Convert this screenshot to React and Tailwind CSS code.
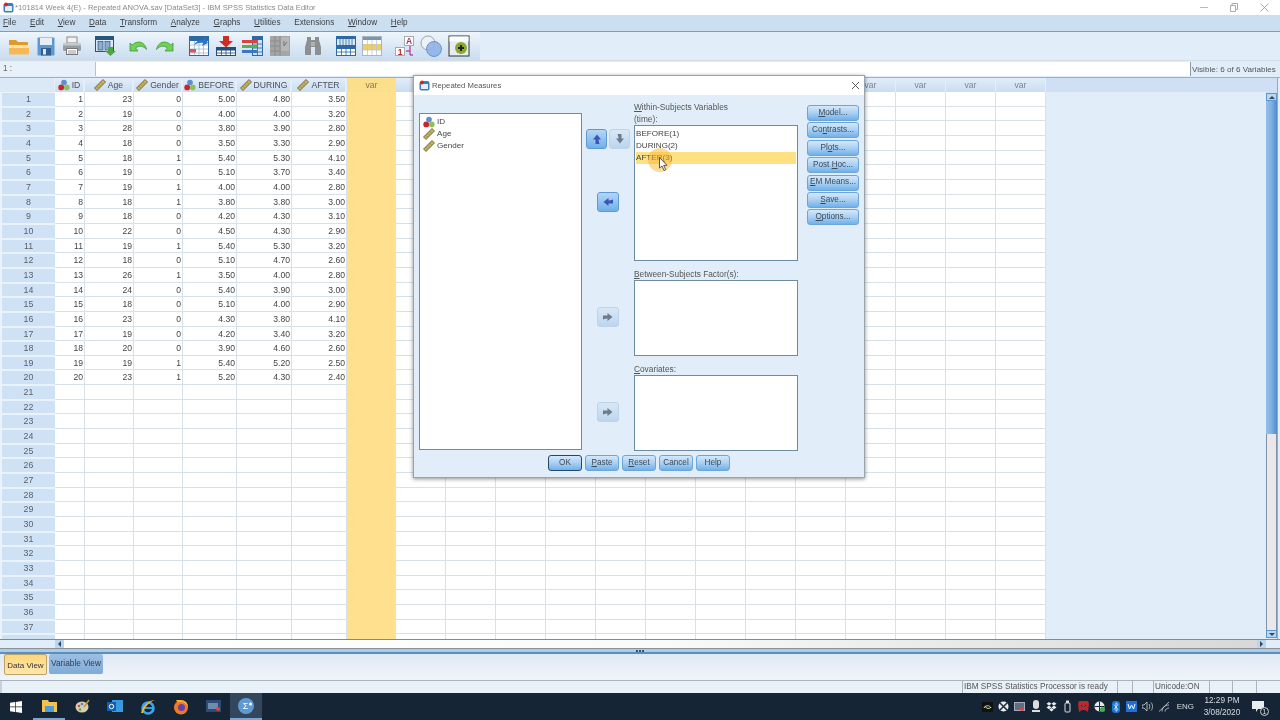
// App.jsx
const FONT = "font-['Liberation_Sans',Arial,sans-serif]";

const rows = [
  [1, 23, 0, '5.00', '4.80', '3.50'],
  [2, 19, 0, '4.00', '4.00', '3.20'],
  [3, 28, 0, '3.80', '3.90', '2.80'],
  [4, 18, 0, '3.50', '3.30', '2.90'],
  [5, 18, 1, '5.40', '5.30', '4.10'],
  [6, 19, 0, '5.10', '3.70', '3.40'],
  [7, 19, 1, '4.00', '4.00', '2.80'],
  [8, 18, 1, '3.80', '3.80', '3.00'],
  [9, 18, 0, '4.20', '4.30', '3.10'],
  [10, 22, 0, '4.50', '4.30', '2.90'],
  [11, 19, 1, '5.40', '5.30', '3.20'],
  [12, 18, 0, '5.10', '4.70', '2.60'],
  [13, 26, 1, '3.50', '4.00', '2.80'],
  [14, 24, 0, '5.40', '3.90', '3.00'],
  [15, 18, 0, '5.10', '4.00', '2.90'],
  [16, 23, 0, '4.30', '3.80', '4.10'],
  [17, 19, 0, '4.20', '3.40', '3.20'],
  [18, 20, 0, '3.90', '4.60', '2.60'],
  [19, 19, 1, '5.40', '5.20', '2.50'],
  [20, 23, 1, '5.20', '4.30', '2.40'],
];

// la fila 38 solo asoma unos pixeles, va sin numero
const rowNums = Array.from({ length: 38 }, (_, i) => i + 1);
const extraCols = Array.from({ length: 13 }, (_, i) => i);

const NominalIcon = () => (
  <svg width="12" height="12" viewBox="0 0 12 12" className="shrink-0">
    <circle cx="6" cy="3.5" r="2.8" fill="#5b8fd0" />
    <circle cx="3.2" cy="8.4" r="2.9" fill="#c8262c" />
    <circle cx="8.8" cy="8.4" r="2.8" fill="#8fbf5a" />
  </svg>
);

const ScaleIcon = () => (
  <svg width="12" height="12" viewBox="0 0 12 12" className="shrink-0">
    <path d="M0.5 9 L9 0.5 L11.5 3 L3 11.5 Z" fill="#c9b25c" stroke="#5d5330" strokeWidth="0.8" />
    <path d="M3 7.5l1.2 1.2M5 5.500l1.200 1.200M7 3.500l1.200 1.200" stroke="#5d5330" strokeWidth="0.7" />
  </svg>
);

const AppIcon = () => (
  <svg width="11" height="11" viewBox="0 0 11 11" className="shrink-0">
    <rect x="0.500" y="1" width="10" height="9.500" rx="2" fill="#3d7eb5" />
    <rect x="2" y="4" width="7" height="5" fill="#e6eef5" />
    <path d="M3 0.500v4M1 2.500h4" stroke="#c4262e" strokeWidth="1.400" />
  </svg>
);

const FolderIcon = () => (
  <svg width="22" height="20" viewBox="0 0 22 20">
    <path d="M1 4h7l2 2h10v3H1z" fill="#e09a2c" />
    <path d="M1 9h20v8a1.500 1.500 0 0 1-1.500 1.500h-17A1.500 1.500 0 0 1 1 17z" fill="#f6b955" />
    <path d="M1 9h20v3H1z" fill="#ffe3a6" />
  </svg>
);

const SaveIcon = () => (
  <svg width="18" height="19" viewBox="0 0 18 19">
    <rect x="0.500" y="0.500" width="17" height="18" rx="1" fill="#5f97cf" />
    <rect x="3" y="1" width="12" height="7" fill="#e8eef5" />
    <rect x="4" y="11" width="10" height="7.500" fill="#2f5f93" />
    <rect x="6" y="12" width="3" height="5.500" fill="#dfe9f3" />
  </svg>
);

const PrintIcon = () => (
  <svg width="20" height="20" viewBox="0 0 20 20">
    <rect x="5" y="1" width="10" height="6" fill="#f2f2f2" stroke="#888" />
    <rect x="1" y="7" width="18" height="8" rx="1.500" fill="#9a9fa5" />
    <rect x="1" y="7" width="18" height="2.500" fill="#c6cacd" />
    <rect x="4.500" y="12.500" width="11" height="6" fill="#fff" stroke="#777" />
    <path d="M6 15h8M6 17h8" stroke="#999" />
  </svg>
);

const GotoVarIcon = () => (
  <svg width="21" height="20" viewBox="0 0 21 20">
    <rect x="0.500" y="0.500" width="18" height="15" fill="#dfe8f2" stroke="#28557f" />
    <rect x="1" y="1" width="17" height="3" fill="#28557f" />
    <rect x="3" y="5.500" width="5" height="8.500" fill="#89aed2" stroke="#28557f" strokeWidth="0.7" />
    <rect x="10" y="5.500" width="5" height="8.500" fill="#89aed2" stroke="#28557f" strokeWidth="0.7" />
    <path d="M13 11h5v4h3l-5.500 5-5.500-5h3z" fill="#4ca83c" />
  </svg>
);

const UndoIcon = ({ flip }) => (
  <svg width="18" height="12" viewBox="0 0 18 12" style={flip ? { transform: 'scaleX(-1)' } : undefined}>
    <path d="M1 11V3l2.200 2C6 2 11 1 14 3.500c2 1.500 3 3.500 3.500 6-3-3.500-7-4.500-11-1.500L9 11z" fill="#6fd05a" stroke="#3f9a3a" strokeWidth="0.8" />
  </svg>
);

const GridBase = ({ children, header = '#2d6aa3' }) => (
  <svg width="20" height="20" viewBox="0 0 20 20">
    <rect x="0.500" y="0.500" width="19" height="19" fill="#fff" stroke={header} />
    <rect x="1" y="1" width="18" height="4" fill={header} />
    <path d="M1 9h18M1 13h18M1 17h18M5.500 5v14M10 5v14M14.500 5v14" stroke="#9db9d5" strokeWidth="0.8" />
    {children}
  </svg>
);

const GotoCaseIcon = () => (
  <GridBase>
    <rect x="1" y="13" width="6" height="3.500" fill="#d9545c" />
    <path d="M5 9c2-4 6-6 10-5l1-3 3 6-6 3 1-3c-3-.5-6 .5-9 2z" fill="#2c76c8" />
  </GridBase>
);

const InsertCaseIcon = () => (
  <svg width="20" height="20" viewBox="0 0 20 20">
    <path d="M7 0h6v5h4l-7 6.500L3 5h4z" fill="#cf2d23" />
    <rect x="0.500" y="11.500" width="19" height="8" fill="#fff" stroke="#234f7c" />
    <rect x="1" y="12" width="18" height="2.500" fill="#234f7c" />
    <path d="M1 17h18M5.500 14v5M10 14v5M14.500 14v5" stroke="#234f7c" strokeWidth="0.8" />
  </svg>
);

const InsertVarIcon = () => (
  <svg width="21" height="20" viewBox="0 0 21 20">
    <rect x="10.500" y="0.500" width="10" height="19" fill="#cfe1f1" stroke="#2d6aa3" />
    <rect x="11" y="1" width="9" height="3" fill="#2d6aa3" />
    <path d="M11 8h9M11 12h9M11 16h9M15.500 4v15" stroke="#2d6aa3" strokeWidth="0.8" />
    <rect x="0" y="4" width="15" height="3" fill="#d8453f" />
    <rect x="0" y="9" width="15" height="3" fill="#59b14b" />
    <rect x="0" y="14" width="15" height="3" fill="#3a78c4" />
  </svg>
);

const SplitIcon = () => (
  <svg width="20" height="20" viewBox="0 0 20 20">
    <rect x="0" y="0" width="20" height="20" fill="#a3a5a6" />
    <path d="M5 0v20M10 0v20M0 5h10M0 10h10M0 15h10" stroke="#8a8c8d" />
    <rect x="11" y="1" width="8" height="14" fill="#b5b6b6" />
    <path d="M14 5v5M14 10l3-4" stroke="#777" />
  </svg>
);

const BinocularsIcon = () => (
  <svg width="18" height="20" viewBox="0 0 18 20">
    <path d="M3 1h4v3h4V1h4v3l2 7v7a1 1 0 0 1-1 1h-5v-8H7v8H2a1 1 0 0 1-1-1v-7l2-7z" fill="#8d9092" />
    <rect x="7" y="6" width="4" height="4" fill="#b0b2b3" />
  </svg>
);

const ValueLabelsIcon = () => (
  <svg width="20" height="20" viewBox="0 0 20 20">
    <rect x="0.500" y="0.500" width="19" height="9" fill="#dbe8f4" stroke="#2d6aa3" />
    <rect x="1" y="1" width="18" height="2" fill="#2d6aa3" />
    <path d="M4 3v6M7 3v6M10 3v6M13 3v6M16 3v6" stroke="#2d6aa3" strokeWidth="0.8" />
    <rect x="0.500" y="10.500" width="19" height="9" fill="#fff" stroke="#2d6aa3" />
    <rect x="1" y="11" width="18" height="2" fill="#2d6aa3" />
    <path d="M1 16h18M5.500 13v6M10 13v6M14.500 13v6" stroke="#2d6aa3" strokeWidth="0.8" />
  </svg>
);

const WeightIcon = () => (
  <svg width="20" height="20" viewBox="0 0 20 20">
    <rect x="0.500" y="0.500" width="19" height="19" fill="#fff" stroke="#a7b6c4" />
    <rect x="1" y="1" width="18" height="3" fill="#7d94ab" />
    <rect x="1" y="8" width="18" height="6" fill="#f0cf62" />
    <path d="M1 9h18M1 14h18M5.500 4v15M10 4v15M14.500 4v15" stroke="#b9c6d2" strokeWidth="0.8" />
  </svg>
);

const LabelIcon = () => (
  <svg width="20" height="21" viewBox="0 0 20 21" className={FONT}>
    <rect x="9.500" y="0.500" width="9" height="9" fill="#fff" stroke="#aaa" />
    <text x="14" y="8" fontSize="8.500" fontWeight="700" fill="#b32a7c" textAnchor="middle">A</text>
    <rect x="0.500" y="11.500" width="9" height="8" fill="#fff" stroke="#aaa" />
    <text x="5" y="18.500" fontSize="8.500" fontWeight="700" fill="#b32a2a" textAnchor="middle">1</text>
    <path d="M11 15h4M15 10v9M15 19h3" stroke="#b64e9e" strokeWidth="1.400" fill="none" />
  </svg>
);

const SetsIcon = () => (
  <svg width="22" height="22" viewBox="0 0 22 22">
    <circle cx="8" cy="8" r="7" fill="#eef2f6" stroke="#9aa5ae" />
    <circle cx="14" cy="14" r="7.500" fill="#8fb4e8" fillOpacity="0.9" stroke="#6f93c8" />
  </svg>
);

const ScriptIcon = () => (
  <svg width="22" height="22" viewBox="0 0 22 22">
    <rect x="1" y="1" width="20" height="20" fill="#e6edf2" stroke="#333" />
    <rect x="1.500" y="1.500" width="19" height="5" fill="#fbfcfd" />
    <circle cx="13" cy="13" r="6" fill="#8aa82c" />
    <path d="M10 13h6M13 10v6" stroke="#222" strokeWidth="2" />
  </svg>
);

const toolbar = [
  [FolderIcon, 'ml-[8px] w-[22px]'],
  [SaveIcon, 'ml-[7px] w-[18px]'],
  [PrintIcon, 'ml-[7px] w-[20px]'],
  [GotoVarIcon, 'ml-[12px] w-[22px]'],
  [UndoIcon, 'ml-[13px] w-[18px]'],
  [() => <UndoIcon flip />, 'ml-[9px] w-[18px]'],
  [GotoCaseIcon, 'ml-[15px] w-[20px]'],
  [InsertCaseIcon, 'ml-[7px] w-[20px]'],
  [InsertVarIcon, 'ml-[6px] w-[21px]'],
  [SplitIcon, 'ml-[7px] w-[20px]'],
  [BinocularsIcon, 'ml-[14px] w-[18px]'],
  [ValueLabelsIcon, 'ml-[14px] w-[20px]'],
  [WeightIcon, 'ml-[6px] w-[20px]'],
  [LabelIcon, 'ml-[13px] w-[20px]'],
  [SetsIcon, 'ml-[5px] w-[22px]'],
  [ScriptIcon, 'ml-[6px] w-[22px]'],
];

const menu = [
  ['F', 'ile'], ['E', 'dit'], ['V', 'iew'], ['D', 'ata'], ['T', 'ransform'], ['A', 'nalyze'],
  ['G', 'raphs'], ['U', 'tilities'], ['', 'Extensions'], ['W', 'indow'], ['H', 'elp'],
];

const ColHead = ({ icon, label, w }) => (
  <div className={`${w} h-full shrink-0 flex items-center justify-center gap-[2px] bg-gradient-to-b from-[#e2edf8] to-[#c9ddf2] border-r-2 border-[#e4eef7] text-[8.600px] text-[#4a4f55]`}>
    {icon}
    <span>{label}</span>
  </div>
);

const colW = ['w-[30px]', 'w-[49px]', 'w-[49px]', 'w-[54px]', 'w-[55px]', 'w-[55px]'];

const Cell = ({ w, v }) => (
  <div className={`${w} h-full shrink-0 border-r border-b border-[#d6e2e8] bg-white pr-[1px] text-right text-[8.600px] leading-[14px] text-[#444]`}>{v}</div>
);

const ArrowBtn = ({ dir = 'right', active, className = '' }) => {
  const rot = { right: '', left: 'rotate-180', up: '-rotate-90', down: 'rotate-90' }[dir];
  return (
    <div className={`${className} h-[20px] rounded-[3px] flex items-center justify-center border ${active ? 'border-[#5c9ad6] bg-gradient-to-b from-[#b4d6f5] to-[#6fafe8]' : 'border-[#bdd3e8] bg-gradient-to-b from-[#d9e8f6] to-[#bcd5ee]'}`}>
      <svg width="10" height="10" viewBox="0 0 10 10" className={rot}>
        <path d="M0 3.500h4.500V1L9.500 5 4.500 9V6.500C3 6.500 1.500 7 0 7.500z" fill={active ? '#3a55b8' : '#6d7c8c'} />
      </svg>
    </div>
  );
};

const SideBtn = ({ children, w = 'w-[52px]', focused }) => (
  <div className={`${w} h-[16px] rounded-[3px] border ${focused ? 'border-[#23476b]' : 'border-[#6aa5dc]'} bg-gradient-to-b from-[#d4e8fa] via-[#a9d0f3] to-[#70b0ea] flex items-center justify-center text-[8.200px] text-[#3e4a56] whitespace-nowrap`}>
    <span>{children}</span>
  </div>
);

const ListBox = ({ className = '', children }) => (
  <div className={`${className} bg-white border border-[#6c8ca3] text-[8.100px] leading-[12px] text-[#444]`}>{children}</div>
);

const VarRow = ({ icon, label }) => (
  <div className="flex h-[12px] items-center gap-[2px] pl-[3px]">
    {icon}
    <span>{label}</span>
  </div>
);

function Dialog() {
  return (
    <div className="absolute left-[413px] top-[75px] w-[452px] h-[403px] bg-[#e1edf8] border border-[#9aa3aa] shadow-[0_1px_4px_rgba(0,0,0,0.45)] flex flex-col">
      <div className="h-[19px] bg-white flex items-center pl-[5px] pr-[4px] shrink-0">
        <AppIcon />
        <span className="ml-[2px] text-[7.700px] text-[#555]">Repeated Measures</span>
        <svg width="9" height="9" viewBox="0 0 9 9" className="ml-auto">
          <path d="M1 1l7 7M8 1l-7 7" stroke="#444" strokeWidth="0.900" />
        </svg>
      </div>
      <div className="flex flex-1 pl-[5px]">
        <ListBox className="w-[163px] h-[337px] mt-[18px] pt-[2px]">
          <VarRow icon={<NominalIcon />} label="ID" />
          <VarRow icon={<ScaleIcon />} label="Age" />
          <VarRow icon={<ScaleIcon />} label="Gender" />
        </ListBox>
        <div className="w-[52px] flex flex-col pt-[34px]">
          <div className="flex gap-[2px] pl-[4px]">
            <ArrowBtn dir="up" active className="w-[21px]" />
            <ArrowBtn dir="down" className="w-[21px]" />
          </div>
          <ArrowBtn dir="left" active className="w-[22px] ml-[15px] mt-[43px]" />
          <ArrowBtn className="w-[22px] ml-[15px] mt-[95px]" />
          <ArrowBtn className="w-[22px] ml-[15px] mt-[75px]" />
        </div>
        <div className="w-[164px] flex flex-col pt-[6px] text-[8.300px] leading-[12px] text-[#555]">
          <div><u>W</u>ithin-Subjects Variables</div>
          <div>(time):</div>
          <ListBox className="h-[136px] px-[1px] pt-[2px] border-[#3d4f5f]">
            <div className="h-[12px]">BEFORE(1)</div>
            <div className="h-[12px]">DURING(2)</div>
            <div className="h-[12px] bg-[#ffe083]">AFTER(3)</div>
          </ListBox>
          <div className="mt-[7px] h-[12px]"><u>B</u>etween-Subjects Factor(s):</div>
          <ListBox className="h-[76px]" />
          <div className="mt-[7px] h-[12px]"><u>C</u>ovariates:</div>
          <ListBox className="h-[76px]" />
        </div>
        <div className="ml-[9px] flex flex-col gap-[1.400px] pt-[10px]">
          <SideBtn><u>M</u>odel...</SideBtn>
          <SideBtn>Co<u>n</u>trasts...</SideBtn>
          <SideBtn>Pl<u>o</u>ts...</SideBtn>
          <SideBtn>Post <u>H</u>oc...</SideBtn>
          <SideBtn><u>E</u>M Means...</SideBtn>
          <SideBtn><u>S</u>ave...</SideBtn>
          <SideBtn><u>O</u>ptions...</SideBtn>
        </div>
      </div>
      <div className="flex justify-center gap-[3px] pb-[6px] -mt-[1px]">
        <SideBtn w="w-[34px]" focused>OK</SideBtn>
        <SideBtn w="w-[34px]"><u>P</u>aste</SideBtn>
        <SideBtn w="w-[34px]"><u>R</u>eset</SideBtn>
        <SideBtn w="w-[34px]">Cancel</SideBtn>
        <SideBtn w="w-[34px]">Help</SideBtn>
      </div>
    </div>
  );
}

const tray = [
  <svg width="11" height="10" viewBox="0 0 11 10"><rect width="11" height="10" fill="#111" /><path d="M2 6c1-3 6-3 7 0M3 4c1 3 5 3 6 1" stroke="#cfe8a8" fill="none" /></svg>,
  <svg width="11" height="11" viewBox="0 0 11 11"><circle cx="5.500" cy="5.500" r="5" fill="#eee" /><path d="M2 2l7 7M9 2L2 9" stroke="#1b2a3b" strokeWidth="1.500" /></svg>,
  <svg width="11" height="10" viewBox="0 0 11 10"><rect x="0.500" y="0.500" width="10" height="8" fill="#5e6e80" stroke="#aab" /><circle cx="8" cy="7" r="2" fill="#d94545" /></svg>,
  <svg width="8" height="13" viewBox="0 0 8 13"><rect x="1" y="0" width="6" height="9" rx="3" fill="#ddd" /><rect x="0" y="10" width="8" height="2" fill="#ddd" /></svg>,
  <svg width="11" height="10" viewBox="0 0 11 10"><path d="M3 0l2.500 1.800L3 3.600.5 1.800zM8 0l2.500 1.800L8 3.600 5.500 1.800zM3 3.600l2.500 1.800L3 7.200.5 5.400zM8 3.600l2.500 1.800L8 7.200 5.500 5.400zM5.500 6l2.200 1.700-2.200 1.700-2.200-1.700z" fill="#e8edf2" /></svg>,
  <svg width="8" height="13" viewBox="0 0 8 13"><rect x="1" y="3" width="5" height="9" rx="1" fill="none" stroke="#ddd" /><rect x="2" y="0.500" width="3" height="2.500" fill="#ddd" /></svg>,
  <svg width="11" height="11" viewBox="0 0 11 11"><path d="M1 0h9l1 3-1 8-3-2H4l-3 2-1-8z" fill="#b8282c" /><path d="M3 4l1.500 1.500M8 4L6.500 5.500" stroke="#1b2a3b" /></svg>,
  <svg width="11" height="11" viewBox="0 0 11 11"><circle cx="5.500" cy="5.500" r="5" fill="#e8e8e8" /><path d="M5.500 .5v10M.5 5.500h10" stroke="#1b2a3b" /><circle cx="8.500" cy="8.500" r="2.500" fill="#3fae4b" /></svg>,
  <svg width="8" height="12" viewBox="0 0 8 12"><rect width="8" height="12" rx="3" fill="#1776d2" /><path d="M2 3.500l4 5-2 1.800V1.700l2 1.800-4 5" stroke="#fff" strokeWidth="0.700" fill="none" /></svg>,
  <svg width="11" height="11" viewBox="0 0 11 11"><rect width="11" height="11" fill="#1f6fd8" /><path d="M2 3l1.500 5L5.500 4l2 4L9 3" stroke="#fff" fill="none" /></svg>,
  <svg width="12" height="11" viewBox="0 0 12 11"><path d="M0 4h2l3-3v9L2 7H0zM7 3c1 1 1 4 0 5M9 1.500c2 2 2 6 0 8" stroke="#cfd6dc" strokeWidth="0.800" fill="none" /></svg>,
  <svg width="12" height="11" viewBox="0 0 12 11"><path d="M1 10.500L11 1M4 10.500C4 7 7 4 11 4M7 10.500c0-2 2-3.500 4-3.500" stroke="#cfd6dc" strokeWidth="0.800" fill="none" /></svg>,
];

function Taskbar() {
  return (
    <div className="h-[27px] shrink-0 bg-[#162536] flex items-center text-[#d5dbe1]">
      <svg width="12" height="12" viewBox="0 0 12 12" className="ml-[10px]">
        <path d="M0 1.700L5 1v4.600H0zM5.700 .9L12 0v5.600H5.700zM0 6.300h5V11l-5-.7zM5.700 6.300H12V12l-6.300-.9z" fill="#fff" />
      </svg>
      <div className="ml-[11px] w-[32px] h-full flex items-center justify-center border-b-2 border-[#7aa6cf]">
        <svg width="15" height="13" viewBox="0 0 15 13"><path d="M0 1h6l1 2h8v10H0z" fill="#f2c14e" /><rect x="3" y="7" width="9" height="6" fill="#4c9fd6" /></svg>
      </div>
      <div className="w-[34px] flex justify-center">
        <svg width="15" height="15" viewBox="0 0 15 15"><ellipse cx="7" cy="8" rx="6.500" ry="5.500" fill="#d9cdb3" /><circle cx="4" cy="7" r="1.300" fill="#d9483b" /><circle cx="7" cy="5" r="1.300" fill="#3c8ed8" /><circle cx="5" cy="10.500" r="1.300" fill="#4caf50" /><path d="M9 8l5-7" stroke="#c9962c" strokeWidth="1.500" /></svg>
      </div>
      <div className="w-[32px] flex justify-center">
        <svg width="16" height="15" viewBox="0 0 16 15"><rect x="5" y="1" width="11" height="12" fill="#3a9ae0" /><rect x="0" y="3" width="9" height="9" fill="#0f5fb3" /><circle cx="4.500" cy="7.500" r="2.200" fill="none" stroke="#fff" /></svg>
      </div>
      <div className="w-[33px] flex justify-center">
        <svg width="16" height="16" viewBox="0 0 16 16"><circle cx="8" cy="9" r="5.500" fill="none" stroke="#3ba7e8" strokeWidth="2.600" /><path d="M3 9h10" stroke="#3ba7e8" strokeWidth="1.800" /><path d="M1 14C3 6 9 1 15 1c-4 1-10 6-12 13z" fill="#e9b93a" /></svg>
      </div>
      <div className="w-[33px] flex justify-center">
        <svg width="16" height="16" viewBox="0 0 16 16"><circle cx="8" cy="8.500" r="7" fill="#ef7a24" /><circle cx="8.500" cy="8.500" r="3.500" fill="#6b3fa8" /><path d="M3 1c1 3 3 2 5 2 3 0 6 2 7 5 0-4-3-7-7-7-2 0-3 0-5 0z" fill="#f6b12d" /></svg>
      </div>
      <div className="w-[33px] flex justify-center">
        <svg width="15" height="14" viewBox="0 0 15 14"><rect width="15" height="12" fill="#2d4b74" /><rect x="2" y="3" width="10" height="6" fill="#708ab0" /><circle cx="12" cy="9" r="2" fill="#d94545" /></svg>
      </div>
      <div className="w-[32px] h-full bg-[#33475c] border-b-2 border-[#7aa6cf] flex items-center justify-center">
        <svg width="16" height="16" viewBox="0 0 16 16" className={FONT}>
          <circle cx="8" cy="8" r="8" fill="#5f9ad0" />
          <text x="7.500" y="11" fontSize="9" fill="#fff" textAnchor="middle">Σ</text>
          <circle cx="12.500" cy="6" r="1.500" fill="#fff" />
        </svg>
      </div>
      <div className="ml-auto flex items-center">
        {tray.map((icon, i) => (
          <div key={i} className="w-[16px] flex justify-center">{icon}</div>
        ))}
      </div>
      <span className="ml-[5px] text-[8px]">ENG</span>
      <div className="ml-[8px] w-[40px] text-center text-[8.200px] leading-[12px]">
        <div>12:29 PM</div>
        <div>3/08/2020</div>
      </div>
      <div className="ml-[10px] mr-[16px] relative w-[12px] h-[12px]">
        <svg width="12" height="11" viewBox="0 0 12 11"><path d="M0 0h12v8H6l-2 3V8H0z" fill="#e8ecef" /></svg>
        <span className="absolute -right-[5px] -bottom-[3px] w-[9px] h-[9px] rounded-full border border-[#ccc] bg-[#162536] text-[7px] leading-[8px] text-center">1</span>
      </div>
    </div>
  );
}

export default function App() {
  return (
    <div className={`${FONT} relative w-[1280px] h-[720px] overflow-hidden bg-[#e1edf8] flex flex-col select-none blur-[0.3px]`}>
      {/* barra de titulo */}
      <div className="h-[15px] shrink-0 bg-white flex items-center pl-[3px]">
        <AppIcon />
        <span className="ml-[1px] text-[7.600px] text-[#8a8a8a]">*101814 Week 4(E) - Repeated ANOVA.sav [DataSet3] - IBM SPSS Statistics Data Editor</span>
        <div className="ml-auto flex items-center text-[#aaa]">
          <svg width="9" height="9" viewBox="0 0 9 9"><path d="M0 4.500h8" stroke="#bbb" /></svg>
          <svg width="9" height="9" viewBox="0 0 9 9" className="ml-[20px]"><path d="M1.500 2.500h5v6h-5zM3 2.500V.5h5.500v6h-2" stroke="#aaa" fill="none" /></svg>
          <svg width="9" height="9" viewBox="0 0 9 9" className="ml-[22px] mr-[11px]"><path d="M.5.500l8 8M8.500.500l-8 8" stroke="#aaa" /></svg>
        </div>
      </div>

      {/* menu */}
      <div className="h-[16px] shrink-0 bg-[#cbdff1] flex items-center pl-[3px] gap-[13.700px] text-[8.200px] text-[#3b3f44]">
        {menu.map(([k, rest]) => (
          <span key={k + rest}>{k && <u>{k}</u>}{rest}</span>
        ))}
      </div>

      {/* toolbar */}
      <div className="h-[29px] shrink-0 border-t border-[#8d9aa6] flex">
        <div className="w-[480px] bg-gradient-to-b from-[#eef5fb] to-[#c9dcef] flex items-center">
          {toolbar.map(([Icon, cls], i) => (
            <div key={i} className={`${cls} shrink-0 flex justify-center`}><Icon /></div>
          ))}
        </div>
        <div className="flex-1 bg-[#e1edf8]" />
      </div>

      {/* barra de celda */}
      <div className="h-[17px] shrink-0 flex items-stretch py-[1px] border-t border-[#d3dde6]">
        <div className="w-[96px] bg-[#e8f1f9] border-r border-[#b8c2ca] pl-[3px] text-[8.200px] leading-[14px] text-[#666]">1 :</div>
        <div className="flex-1 bg-white" />
        <div className="w-[90px] bg-[#e1edf8] border-l border-[#8e99a3] pl-[1px] text-[8.100px] leading-[15px] text-[#555] whitespace-nowrap">Visible: 6 of 6 Variables</div>
      </div>

      {/* hoja de datos */}
      <div className="h-[572px] shrink-0 flex flex-col border-t border-[#8fb4d2]">
        <div className="flex-1 min-h-0 flex">
          <div className="w-[1266px] flex flex-col overflow-hidden">
            <div className="h-[14px] shrink-0 flex bg-[#cfe0f4]">
              <div className="w-[55px] h-full shrink-0 bg-[#dbe8f6] border-r border-[#e8f1f9]" />
              <ColHead w={colW[0]} icon={<NominalIcon />} label="ID" />
              <ColHead w={colW[1]} icon={<ScaleIcon />} label="Age" />
              <ColHead w={colW[2]} icon={<ScaleIcon />} label="Gender" />
              <ColHead w={colW[3]} icon={<NominalIcon />} label="BEFORE" />
              <ColHead w={colW[4]} icon={<ScaleIcon />} label="DURING" />
              <ColHead w={colW[5]} icon={<ScaleIcon />} label="AFTER" />
              <div className="w-[49px] shrink-0 bg-[#fbdf8b] text-center text-[8.600px] leading-[14px] text-[#8a7a50]">var</div>
              {extraCols.map((i) => (
                <div key={i} className="w-[50px] shrink-0 bg-gradient-to-b from-[#e2edf8] to-[#c9ddf2] border-r border-[#e4eef7] text-center text-[8.600px] leading-[14px] text-[#7a8791]">var</div>
              ))}
            </div>
            {rowNums.map((n) => {
              const row = rows[n - 1];
              return (
                <div key={n} className="h-[14.670px] shrink-0 flex">
                  <div className="w-[55px] h-full shrink-0 bg-[#cfe1f5] border-l-2 border-t border-b border-[#eaf3fb] text-center text-[8.800px] leading-[12px] text-[#5a6066]">{n < 38 ? n : ''}</div>
                  {colW.map((w, c) => (
                    <Cell key={c} w={w} v={row ? row[c] : ''} />
                  ))}
                  <div className="w-[49px] h-full shrink-0 bg-[#ffe08e] border-r border-[#f3e2ac]" />
                  {extraCols.map((i) => (
                    <div key={i} className="w-[50px] h-full shrink-0 bg-white border-r border-b border-[#d6e2e8]" />
                  ))}
                </div>
              );
            })}
          </div>
          {/* scroll vertical */}
          <div className="w-[12px] mr-[2px] shrink-0 flex flex-col pb-[1px] border-r border-[#7fb0de]">
            <div className="h-[15px] shrink-0 bg-[#cfe0f4]" />
            <div className="h-[8px] shrink-0 bg-[#b9d5ef] border border-[#5e97cd] flex items-center justify-center">
              <div className="w-0 h-0 border-x-[3px] border-x-transparent border-b-[3px] border-b-[#33475c]" />
            </div>
            <div className="h-[333px] shrink-0 bg-gradient-to-r from-[#95c0ea] via-[#7fb0e2] to-[#4d8ad0]" />
            <div className="flex-1 bg-[#e9e7ea] border-x border-[#7f93a8]" />
            <div className="h-[8px] shrink-0 bg-[#b9d5ef] border border-[#5e97cd] flex items-center justify-center">
              <div className="w-0 h-0 border-x-[3px] border-x-transparent border-t-[3px] border-t-[#33475c]" />
            </div>
          </div>
        </div>
        {/* scroll horizontal */}
        <div className="h-[10px] shrink-0 flex border-y border-t-[#5f93bf] border-b-[#8b9196]">
          <div className="w-[55px] bg-[#e1edf8]" />
          <div className="w-[9px] bg-[#b9d5ef] flex items-center justify-center">
            <div className="w-0 h-0 border-y-[3px] border-y-transparent border-r-[3px] border-r-[#33475c]" />
          </div>
          <div className="flex-1 bg-gradient-to-r from-white via-[#fafafa] to-[#d9d8d8]" />
          <div className="w-[9px] bg-[#b9d5ef] flex items-center justify-center">
            <div className="w-0 h-0 border-y-[3px] border-y-transparent border-l-[3px] border-l-[#33475c]" />
          </div>
          <div className="w-[14px] bg-[#e1edf8]" />
        </div>
      </div>

      {/* separador */}
      <div className="h-[5px] shrink-0 border-b-2 border-[#5f8fb8] bg-[#a6cdec] flex justify-end pr-[636px] gap-[1px] items-center">
        <span className="w-[2px] h-[2px] bg-[#33536e]" />
        <span className="w-[2px] h-[2px] bg-[#33536e]" />
        <span className="w-[2px] h-[2px] bg-[#33536e]" />
      </div>

      {/* pestañas */}
      <div className="h-[26px] shrink-0 bg-gradient-to-b from-[#dfe9f4] to-[#f1f5f9] flex items-start pl-[4px] gap-[2px]">
        <div className="w-[43px] h-[21px] rounded-[2px] border border-[#b9a266] bg-gradient-to-b from-[#ffd67e] to-[#ffe6ac] text-center text-[8px] leading-[21px] text-[#333] whitespace-nowrap">Data View</div>
        <div className="w-[54px] h-[20px] rounded-[2px] bg-gradient-to-b from-[#9cc0e4] to-[#80aad6] text-center text-[8.300px] leading-[18px] text-[#2e3f50] whitespace-nowrap">Variable View</div>
      </div>

      {/* estado */}
      <div className="h-[13px] shrink-0 flex bg-[#e9f1f8] border-t border-[#a9b4bd] text-[8.200px] leading-[11px] text-[#555]">
        <div className="w-[962px] border-l-2 border-[#c8d2da]" />
        <div className="w-[155px] border-l border-[#aab4bd] pl-[1px] whitespace-nowrap">IBM SPSS Statistics Processor is ready</div>
        <div className="w-[15px] border-l border-[#aab4bd]" />
        <div className="w-[21px] border-l border-[#aab4bd]" />
        <div className="w-[56px] border-l border-[#aab4bd] pl-[1px]">Unicode:ON</div>
        <div className="w-[23px] border-l border-[#aab4bd]" />
        <div className="w-[24px] border-l border-[#aab4bd]" />
        <div className="flex-1 border-l border-[#aab4bd]" />
      </div>

      <Taskbar />

      <Dialog />

      {/* halo y puntero del raton */}
      <div className="absolute left-[648px] top-[148px] w-[24px] h-[24px] rounded-full bg-[#f7b733]/50" />
      <svg width="9" height="14" viewBox="0 0 9 14" className="absolute left-[659px] top-[157px]">
        <path d="M.5.500v10.500l2.500-2 2 4.500 1.700-.8-2-4.300h3.300z" fill="#fff" stroke="#333" strokeWidth="0.800" />
      </svg>
    </div>
  );
}
